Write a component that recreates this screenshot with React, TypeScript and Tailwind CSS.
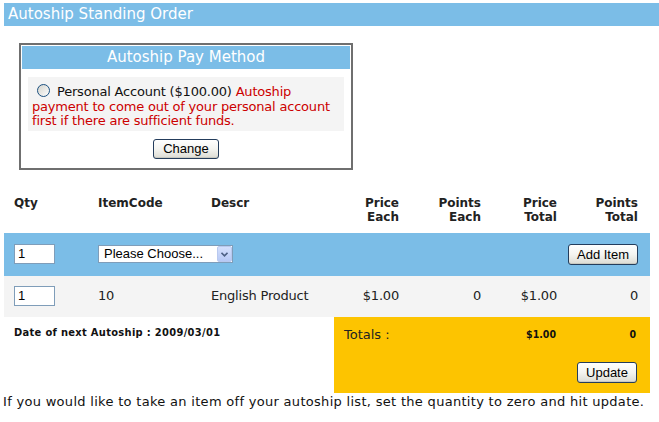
import React from "react";

const BLUE = "bg-[#7bbde7]";

function XpButton({ children, className = "" }: { children: React.ReactNode; className?: string }) {
  return (
    <button
      type="button"
      className={
        "rounded-[3px] border border-[#243d5c] bg-linear-to-b from-[#ffffff] via-[#f4f4f0] to-[#dcdcd4] font-['Liberation_Sans',Arial,sans-serif] text-[13px] leading-none text-black shadow-[inset_0_-1px_0_#c9c9c0] " +
        className
      }
    >
      {children}
    </button>
  );
}

function Radio() {
  return (
    <svg width="13" height="13" viewBox="0 0 13 13" className="inline-block align-[-1px] ml-[5px] mr-[7px]">
      <defs>
        <linearGradient id="rg" x1="0" y1="0" x2="1" y2="1">
          <stop offset="0" stopColor="#d2d2cb" />
          <stop offset="1" stopColor="#ffffff" />
        </linearGradient>
      </defs>
      <circle cx="6.5" cy="6.5" r="6" fill="url(#rg)" stroke="#1c5180" strokeWidth="1" />
    </svg>
  );
}

function TextBox() {
  return (
    <div className="w-[41px] h-[20px] border border-[#7f9db9] bg-white font-['Liberation_Sans',Arial,sans-serif] text-[13px] leading-[18px] pl-[3px] text-black">
      1
    </div>
  );
}

function SelectBox() {
  return (
    <div className="w-[135px] h-[18px] border border-[#7f9db9] bg-white flex items-center justify-between font-['Liberation_Sans',Arial,sans-serif] text-[13px] text-black">
      <span className="pl-[5px] leading-[16px]">Please Choose...</span>
      <span className="w-[15px] h-[16px] bg-linear-to-b from-[#d5e0fc] to-[#b7c9f5] border border-[#b9c9ef] rounded-[2px] flex items-center justify-center">
        <svg width="7" height="5" viewBox="0 0 7 5">
          <path d="M0.5 0.8 L3.5 3.8 L6.5 0.8" fill="none" stroke="#4d6185" strokeWidth="1.6" />
        </svg>
      </span>
    </div>
  );
}

const cols = "grid grid-cols-[84px_113px_120px_68px_82px_76px_81px]";

export default function App() {
  return (
    <div className="w-[659px] h-[422px] bg-white overflow-hidden font-['DejaVu_Sans',Verdana,sans-serif] text-black">
      <div className="pt-[3px] pl-[4px]">
        <div className={`${BLUE} h-[23px] text-white text-[15px] leading-[23px] pl-[4px]`}>Autoship Standing Order</div>
      </div>

      <div className="ml-[19px] mt-[17px] w-[334px] border-2 border-[#6f6f6f] p-px">
        <div className={`${BLUE} h-[23px] text-white text-[15px] leading-[23px] text-center`}>Autoship Pay Method</div>
        <div className="mx-[6px] mt-[8px] bg-[#f4f4f4] pl-[4px] pr-0 pt-[7px] pb-[2px] text-[13px] leading-[14.5px] tracking-[-0.2px]">
          <Radio />
          <span className="text-[#111]">Personal Account ($100.00) </span>
          <span className="text-[#cc0000]">Autoship payment to come out of your personal account first if there are sufficient funds.</span>
        </div>
        <div className="flex justify-center mt-[8px] mb-[8px]">
          <XpButton className="w-[66px] h-[20px]">Change</XpButton>
        </div>
      </div>

      <div className="ml-[4px] w-[646px] mt-[26px] font-['DejaVu_Sans',Verdana,sans-serif]">
        <div className={`${cols} pl-[10px] text-[12px] leading-[14px] font-bold text-[#222]`}>
          <div>Qty</div>
          <div>ItemCode</div>
          <div>Descr</div>
          <div className="text-right">Price<br />Each</div>
          <div className="text-right">Points<br />Each</div>
          <div className="text-right">Price<br />Total</div>
          <div className="text-right">Points<br />Total</div>
        </div>

        <div className={`${BLUE} ${cols} items-center pl-[10px] h-[43px] mt-[9px]`}>
          <div><TextBox /></div>
          <div className="col-span-2"><SelectBox /></div>
          <div className="col-span-4 flex justify-end">
            <XpButton className="w-[70px] h-[21px]">Add Item</XpButton>
          </div>
        </div>

        <div className={`bg-[#f4f4f4] ${cols} items-center pl-[10px] h-[41px] text-[13px] tracking-[-0.2px] text-[#222]`}>
          <div><TextBox /></div>
          <div>10</div>
          <div>English Product</div>
          <div className="text-right">$1.00</div>
          <div className="text-right">0</div>
          <div className="text-right">$1.00</div>
          <div className="text-right">0</div>
        </div>

        <div className="flex h-[76px]">
          <div className="w-[330px] pl-[10px] pt-[9px] font-['DejaVu_Sans_Condensed','DejaVu_Sans',sans-serif] text-[11px] tracking-[0.32px] font-bold leading-[14px] text-[#111]">
            Date of next Autoship : 2009/03/01
          </div>
          <div className="flex-1 bg-[#fdc400] flex flex-col">
            <div className="grid grid-cols-[146px_76px_80px] items-center h-[34px] pt-[2px]">
              <div className="pl-[10px] text-[13px] text-[#222]">Totals :</div>
              <div className="text-right font-['DejaVu_Sans_Condensed','DejaVu_Sans',sans-serif] text-[10.5px] font-bold text-[#111]">$1.00</div>
              <div className="text-right font-['DejaVu_Sans_Condensed','DejaVu_Sans',sans-serif] text-[10.5px] font-bold text-[#111]">0</div>
            </div>
            <div className="flex justify-end pr-[13px] mt-[11px]">
              <XpButton className="w-[60px] h-[21px]">Update</XpButton>
            </div>
          </div>
        </div>

        <div className="text-[13px] leading-[16px] tracking-[0.3px] text-[#111] mt-px -ml-px">
          If you would like to take an item off your autoship list, set the quantity to zero and hit update.
        </div>
      </div>
    </div>
  );
}
